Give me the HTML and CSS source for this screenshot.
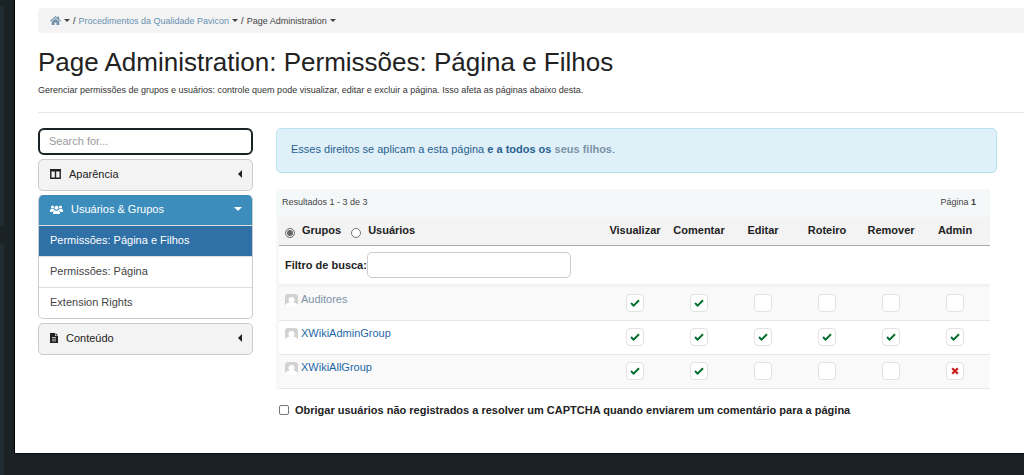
FILE: index.html
```html
<!DOCTYPE html>
<html lang="pt-BR">
<head>
    <meta charset="UTF-8">
    <meta name="viewport" content="width=device-width, initial-scale=1.0">
    <title>Page Administration: Permissões: Página e Filhos</title>
    <link rel="stylesheet" href="styles.css">
</head>
<body>
    <!-- Shared icons -->
    <svg class="sprite" aria-hidden="true">
        <symbol id="check" viewBox="0 0 10 8"><path d="M1 4l2.6 2.6L9 1.2" fill="none" stroke="#04702f" stroke-width="2"/></symbol>
        <symbol id="cross" viewBox="0 0 8 8"><path d="M1.2 1.2l5.6 5.6M6.800 1.2L1.200 6.800" fill="none" stroke="#c9211e" stroke-width="2.300"/></symbol>
        <symbol id="avatar" viewBox="0 0 13 13">
            <rect width="13" height="13" rx="3" fill="#d2d2d2"/>
            <circle cx="6.500" cy="6" r="3" fill="#fff"/>
            <path d="M0 13c0-3 2-4 4.500-4.500h4C11 9 13 10 13 13z" fill="#fff"/>
        </symbol>
    </svg>

    <div class="shell">
        <div class="rail">
            <div class="rail-panel"></div>
            <div class="rail-panel"></div>
        </div>

        <main class="main">
            <nav class="breadcrumb">
                <a href="#" aria-label="Home"><svg width="11" height="9" viewBox="0 0 22 18"><path d="M11 0L0 9.500l1.500 1.800L11 3.200l9.500 8.100L22 9.500l-4-3.500V1h-3v2.500zM11 5l-7.500 6.400V18H9v-5h4v5h5.500v-6.600z" fill="#7290ab"/></svg></a>
                <span class="caret"></span>
                <span>/</span>
                <a href="#">Procedimentos da Qualidade Pavicon</a>
                <span class="caret"></span>
                <span>/</span>
                <span class="current">Page Administration</span>
                <span class="caret"></span>
            </nav>

            <h1>Page Administration: Permissões: Página e Filhos</h1>
            <p class="description">Gerenciar permissões de grupos e usuários: controle quem pode visualizar, editar e excluir a página. Isso afeta as páginas abaixo desta.</p>

            <div class="columns">
                <!-- Admin menu -->
                <aside class="menu">
                    <input class="search" type="text" placeholder="Search for..." aria-label="Search for...">

                    <button class="menu-title" type="button">
                        <svg width="11" height="10" viewBox="0 0 11 10"><path d="M.8 .8h9.400v8.400H.8zM5.500 2v7" fill="none" stroke="#222" stroke-width="1.400"/><path d="M0 0h11v2.500H0z" fill="#222"/></svg>
                        <span>Aparência</span>
                        <span class="caret caret-left"></span>
                    </button>

                    <div class="menu-group">
                        <button class="menu-title menu-title-open" type="button">
                            <svg width="13" height="9" viewBox="0 0 26 18" fill="#fff"><circle cx="5" cy="4" r="3"/><circle cx="21" cy="4" r="3"/><circle cx="13" cy="5.500" r="4"/><path d="M0 13c0-4 1-5.500 3-5.500 2 .8 3.500.8 5 .5 0 1.500.5 2.500 1 3-2 0-3.500 1-4 3H0zM26 13c0-4-1-5.500-3-5.500-2 .8-3.500.8-5 .5 0 1.500-.5 2.500-1 3 2 0 3.500 1 4 3h5zM6 18c0-5 1-7.500 3.500-7.500 2 1.500 5 1.500 7 0C19 10.500 20 13 20 18z"/></svg>
                            <span>Usuários &amp; Grupos</span>
                            <span class="caret"></span>
                        </button>
                        <a class="menu-item active" href="#">Permissões: Página e Filhos</a>
                        <a class="menu-item" href="#">Permissões: Página</a>
                        <a class="menu-item" href="#">Extension Rights</a>
                    </div>

                    <button class="menu-title" type="button">
                        <svg width="8" height="10" viewBox="0 0 8 10"><path d="M0 0h5v3h3v7H0zM5.600 0L8 2.400H5.600z" fill="#222"/><path d="M2 4.500h4M2 6.200h4M2 7.900h4" stroke="#f3f3f3" stroke-width=".7"/></svg>
                        <span>Conteúdo</span>
                        <span class="caret caret-left"></span>
                    </button>
                </aside>

                <section class="content">
                    <div class="info">Esses direitos se aplicam a esta página <b>e a todos os</b> <a href="#">seus filhos</a>.</div>

                    <div class="rights">
                        <div class="results">
                            <span>Resultados 1 - 3 de 3</span>
                            <span>Página <b>1</b></span>
                        </div>
                        <table>
                            <thead>
                                <tr>
                                    <th class="name">
                                        <div class="kinds">
                                            <input type="radio" name="kind" id="groups" checked><label for="groups">Grupos</label>
                                            <input type="radio" name="kind" id="users"><label for="users">Usuários</label>
                                        </div>
                                    </th>
                                    <th>Visualizar</th>
                                    <th>Comentar</th>
                                    <th>Editar</th>
                                    <th>Roteiro</th>
                                    <th>Remover</th>
                                    <th>Admin</th>
                                </tr>
                                <tr class="filter">
                                    <td colspan="7">
                                        <div class="filter-box">
                                            <label for="filter">Filtro de busca:</label>
                                            <input type="text" id="filter">
                                        </div>
                                    </td>
                                </tr>
                            </thead>
                            <tbody>
                                <tr>
                                    <td class="name"><svg class="avatar"><use href="#avatar"/></svg><a class="muted" href="#">Auditores</a></td>
                                    <td><button class="right" type="button"><svg class="check"><use href="#check"/></svg></button></td>
                                    <td><button class="right" type="button"><svg class="check"><use href="#check"/></svg></button></td>
                                    <td><button class="right" type="button"></button></td>
                                    <td><button class="right" type="button"></button></td>
                                    <td><button class="right" type="button"></button></td>
                                    <td><button class="right" type="button"></button></td>
                                </tr>
                                <tr>
                                    <td class="name"><svg class="avatar"><use href="#avatar"/></svg><a href="#">XWikiAdminGroup</a></td>
                                    <td><button class="right" type="button"><svg class="check"><use href="#check"/></svg></button></td>
                                    <td><button class="right" type="button"><svg class="check"><use href="#check"/></svg></button></td>
                                    <td><button class="right" type="button"><svg class="check"><use href="#check"/></svg></button></td>
                                    <td><button class="right" type="button"><svg class="check"><use href="#check"/></svg></button></td>
                                    <td><button class="right" type="button"><svg class="check"><use href="#check"/></svg></button></td>
                                    <td><button class="right" type="button"><svg class="check"><use href="#check"/></svg></button></td>
                                </tr>
                                <tr>
                                    <td class="name"><svg class="avatar"><use href="#avatar"/></svg><a href="#">XWikiAllGroup</a></td>
                                    <td><button class="right" type="button"><svg class="check"><use href="#check"/></svg></button></td>
                                    <td><button class="right" type="button"><svg class="check"><use href="#check"/></svg></button></td>
                                    <td><button class="right" type="button"></button></td>
                                    <td><button class="right" type="button"></button></td>
                                    <td><button class="right" type="button"></button></td>
                                    <td><button class="right" type="button"><svg class="cross"><use href="#cross"/></svg></button></td>
                                </tr>
                            </tbody>
                        </table>
                    </div>

                    <div class="captcha">
                        <input type="checkbox" id="captcha">
                        <label for="captcha">Obrigar usuários não registrados a resolver um CAPTCHA quando enviarem um comentário para a página</label>
                    </div>
                </section>
            </div>
        </main>
    </div>
</body>
</html>
```
FILE: styles.css
```css
* {
    box-sizing: border-box;
}

body {
    margin: 0;
    background-color: #1b2225;
    font-family: "Liberation Sans", Arial, sans-serif;
    font-size: 11px;
    line-height: 16px;
    color: #222;
}

a {
    color: #1f68a6;
    text-decoration: none;
}

input,
button {
    font: inherit;
    margin: 0;
}

.sprite {
    display: none;
}

.shell {
    display: flex;
    align-items: flex-start;
    min-height: 100vh;
}

/* Left rail */
.rail {
    width: 14px;
    height: 100vh;
    padding: 5px 10px 0 0;
    display: grid;
    grid-template-rows: 222px 1fr;
    gap: 16px;
}

.rail-panel {
    background-color: #222d33;
    border-top-right-radius: 4px;
    border-bottom-right-radius: 4px;
}

.rail-panel:last-child {
    border-bottom-right-radius: 0;
}

.main {
    flex: 1;
    min-width: 0;
    padding: 8px 0 35px 23px;
    background-color: #fff;
    border-left: 1px solid #000;
    border-bottom: 1px solid #0a0e10;
}

/* Breadcrumb */
.breadcrumb {
    display: flex;
    align-items: center;
    gap: 3px;
    height: 25px;
    padding: 0 12px;
    background-color: #f3f3f3;
    border-radius: 4px 0 0 4px;
    font-size: 9px;
}

.breadcrumb a {
    display: flex;
    color: #6a91b2;
}

.breadcrumb .current {
    color: #444;
}

.caret {
    border-top: 3px solid #444;
    border-left: 3px solid transparent;
    border-right: 3px solid transparent;
}

h1 {
    margin: 13px 0 0;
    font-size: 26px;
    line-height: 32px;
    font-weight: normal;
}

.description {
    margin: 0;
    padding: 4px 0 14px;
    font-size: 9px;
    color: #333;
    border-bottom: 1px solid #e8e8e8;
}

.columns {
    display: grid;
    grid-template-columns: 215px 1fr;
    gap: 23px;
    padding: 15px 27px 0 0;
}

/* Menu */
.menu {
    display: flex;
    flex-direction: column;
    gap: 4px;
}

.search {
    width: 100%;
    height: 27px;
    padding: 0 9px 2px;
    border: 2px solid #1b2225;
    border-radius: 6px;
}

.search::placeholder {
    color: #999;
}

.menu-title {
    display: flex;
    align-items: center;
    gap: 8px;
    width: 100%;
    height: 32px;
    padding: 0 10px 2px 11px;
    background-color: #f3f3f3;
    border: 1px solid #ccc;
    border-radius: 5px;
    color: #222;
}

.menu-title .caret {
    margin-left: auto;
    border-width: 4px 4px 0;
}

.menu-title .caret-left {
    border-style: solid;
    border-color: transparent #222;
    border-width: 4px 4px 4px 0;
}

.menu-group {
    border: 1px solid #ccc;
    border-top: none;
    border-radius: 5px;
    overflow: hidden;
}

.menu-title-open {
    height: 30px;
    background-color: #3c8dbc;
    border: none;
    border-radius: 0;
    color: #fff;
}

.menu-title-open .caret {
    border-top-color: #fff;
}

.menu-item {
    display: block;
    padding: 6px 11px 8px;
    border-top: 1px solid #ddd;
    color: #444;
}

.menu-item.active {
    background-color: #2f70a7;
    color: #fff;
}

/* Rights */
.info {
    padding: 12px 14px 15px;
    background-color: #dff0f9;
    border: 1px solid #b5e3ee;
    border-radius: 5px;
    color: #28618f;
}

.info a {
    color: #7c93a8;
    font-weight: bold;
}

.rights {
    margin: 16px 7px 0 0;
    padding-left: 3px;
    background-color: #f4f8f9;
}

.results {
    display: flex;
    justify-content: space-between;
    padding: 5px 14px 7px 3px;
    font-size: 9px;
    color: #444;
}

table {
    width: 100%;
    table-layout: fixed;
    border-collapse: separate;
    border-spacing: 0;
}

th,
td {
    width: 64px;
    padding: 0;
    vertical-align: top;
    text-align: center;
}

th:last-child,
tbody td:last-child {
    width: 67px;
    padding-right: 3px;
}

th {
    height: 29px;
    padding-top: 5px;
    background-color: #f3f3f3;
    border-bottom: 1px solid #aaa;
}

.name {
    width: auto;
    text-align: left;
    padding-left: 6px;
}

.kinds {
    display: flex;
    align-items: center;
}

.kinds label {
    margin: 0 10px 0 7px;
}

input[type="radio"] {
    appearance: none;
    width: 10px;
    height: 10px;
    margin-top: 5px;
    background-color: #fff;
    border: 1px solid #777;
    border-radius: 50%;
}

input[type="radio"]:checked {
    background-color: #666;
    box-shadow: inset 0 0 0 1px #fff;
}

.filter td {
    background-color: #fff;
    border-bottom: 3px solid #f3f3f3;
}

.filter-box {
    display: flex;
    align-items: center;
    padding: 6px;
    font-weight: bold;
}

.filter-box input {
    width: 204px;
    height: 26px;
    padding: 0 8px;
    border: 1px solid #ccc;
    border-radius: 5px;
}

tbody td {
    height: 34px;
    padding-top: 7px;
    background-color: #fff;
    border-bottom: 1px solid #e6e6e6;
}

tbody tr:nth-child(odd) td {
    background-color: #f9f9f9;
}

tbody .name {
    padding-top: 4px;
}

.avatar {
    width: 13px;
    height: 13px;
    margin-right: 3px;
    vertical-align: middle;
}

.muted {
    color: #7c93a8;
}

.right {
    display: flex;
    align-items: center;
    justify-content: center;
    width: 18px;
    height: 18px;
    margin: 0 auto;
    padding: 0;
    background-color: #fff;
    border: 1px solid #e2e2e2;
    border-radius: 4px;
}

.check {
    width: 10px;
    height: 8px;
}

.cross {
    width: 8px;
    height: 8px;
}

.captcha {
    display: flex;
    align-items: center;
    gap: 6px;
    padding: 13px 0 0 3px;
    font-weight: bold;
}

.captcha input {
    appearance: none;
    width: 10px;
    height: 10px;
    background-color: #fff;
    border: 1px solid #767676;
    border-radius: 2px;
}
```
